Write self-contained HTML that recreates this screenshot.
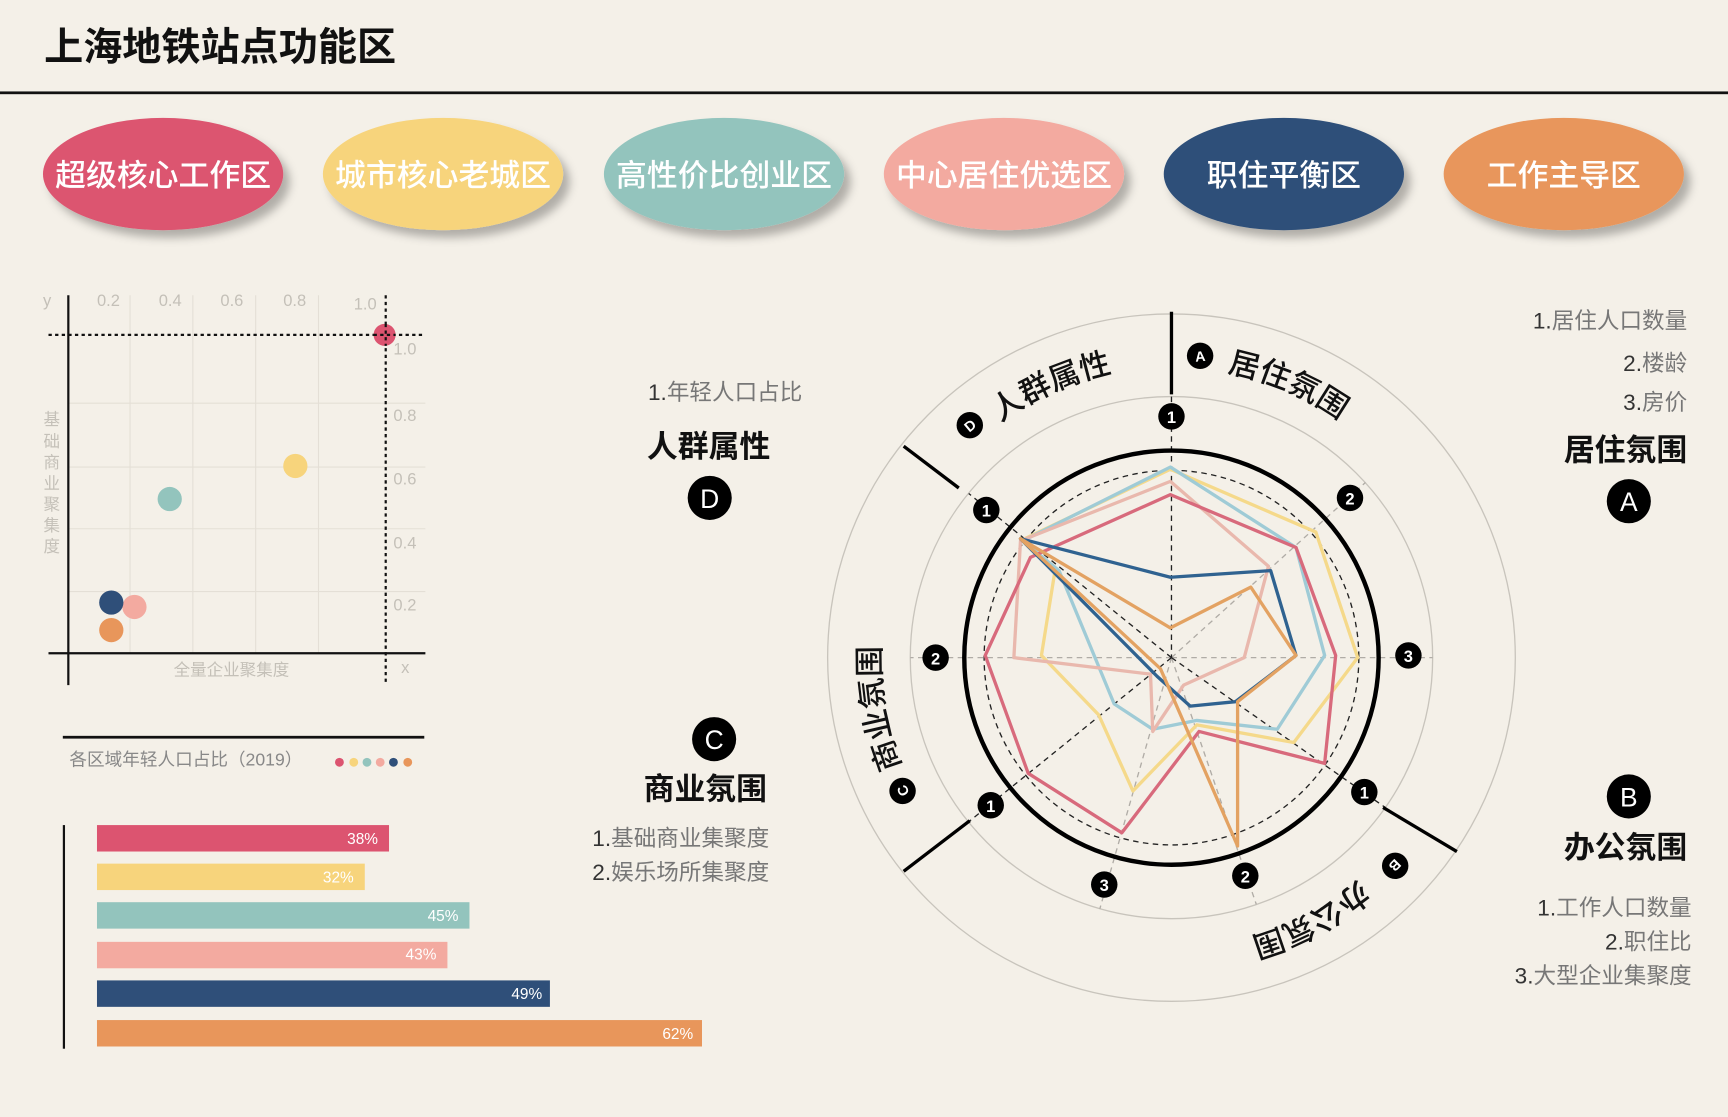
<!DOCTYPE html>
<html><head><meta charset="utf-8"><style>
html,body{margin:0;padding:0;background:#f4f0e8;overflow:hidden}
svg{display:block}
text{font-family:"Liberation Sans","Noto Sans CJK SC",sans-serif}
.g{fill:#777}
</style></head><body>
<svg width="1728" height="1117" viewBox="0 0 1568 1014" preserveAspectRatio="none" xmlns="http://www.w3.org/2000/svg">
<defs>
<filter id="sh" x="-20%" y="-20%" width="150%" height="160%"><feDropShadow dx="6" dy="7" stdDeviation="4" flood-color="#000" flood-opacity="0.28"/></filter>
<path id="pA" d="M1113.4,337.9 A264,264 0 0 1 1323,551.2"/>
<path id="pD" d="M907.8,383.4 A264,264 0 0 1 1195,368.4"/>
<path id="pC" d="M818.3,695.9 A264,264 0 0 1 893.3,394.8"/>
<path id="pB" d="M1236.2,796.2 A264,264 0 0 1 931,825.6"/>
</defs>
<rect width="1568" height="1014" fill="#f4f0e8"/>
<text x="40" y="55" font-size="35.5" font-weight="700" fill="#111">上海地铁站点功能区</text>
<rect x="0" y="83" width="1568" height="2.5" fill="#111"/>

<g filter="url(#sh)">
<ellipse cx="148" cy="158" rx="109" ry="51" fill="#dc5470"/>
<ellipse cx="402" cy="158" rx="109" ry="51" fill="#f7d47c"/>
<ellipse cx="657" cy="158" rx="109" ry="51" fill="#93c4bd"/>
<ellipse cx="911" cy="158" rx="109" ry="51" fill="#f3aaa0"/>
<ellipse cx="1165" cy="158" rx="109" ry="51" fill="#2f4f79"/>
<ellipse cx="1419" cy="158" rx="109" ry="51" fill="#e8965b"/>
</g>
<g font-size="28" fill="#fff" text-anchor="middle" font-weight="500">
<text x="148" y="169">超级核心工作区</text>
<text x="402" y="169">城市核心老城区</text>
<text x="657" y="169">高性价比创业区</text>
<text x="911" y="169">中心居住优选区</text>
<text x="1165" y="169">职住平衡区</text>
<text x="1419" y="169">工作主导区</text>
</g>

<g stroke="#e4dfd6" stroke-width="1">
<line x1="118" y1="268" x2="118" y2="593"/><line x1="175" y1="268" x2="175" y2="593"/>
<line x1="232" y1="268" x2="232" y2="593"/><line x1="289" y1="268" x2="289" y2="593"/>
<line x1="62" y1="366" x2="386" y2="366"/><line x1="62" y1="424" x2="386" y2="424"/>
<line x1="62" y1="480" x2="386" y2="480"/><line x1="62" y1="537" x2="386" y2="537"/>
</g>
<line x1="62" y1="268" x2="62" y2="622" stroke="#111" stroke-width="2"/>
<line x1="44" y1="593" x2="386" y2="593" stroke="#111" stroke-width="2"/>
<line x1="44" y1="304" x2="386" y2="304" stroke="#111" stroke-width="2" stroke-dasharray="3,3"/>
<line x1="350" y1="268" x2="350" y2="622" stroke="#111" stroke-width="2" stroke-dasharray="3,3"/>
<g font-size="15" fill="#c4c0b8">
<text x="39" y="278">y</text><text x="88" y="278">0.2</text><text x="144" y="278">0.4</text><text x="200" y="278">0.6</text><text x="257" y="278">0.8</text><text x="321" y="281">1.0</text>
<text x="357" y="322">1.0</text><text x="357" y="382">0.8</text><text x="357" y="440">0.6</text><text x="357" y="498">0.4</text><text x="357" y="554">0.2</text>
<text x="364" y="611">x</text><text x="210" y="613" text-anchor="middle">全量企业聚集度</text>
<text x="47" y="386" text-anchor="middle">基</text><text x="47" y="406" text-anchor="middle">础</text><text x="47" y="425" text-anchor="middle">商</text><text x="47" y="444" text-anchor="middle">业</text><text x="47" y="463" text-anchor="middle">聚</text><text x="47" y="482" text-anchor="middle">集</text><text x="47" y="501" text-anchor="middle">度</text>
</g>
<circle cx="349" cy="304" r="10" fill="#dc5470"/>
<line x1="339" y1="304" x2="359" y2="304" stroke="#111" stroke-width="2" stroke-dasharray="3,3"/>
<line x1="350" y1="294" x2="350" y2="314" stroke="#111" stroke-width="2" stroke-dasharray="3,3"/>
<circle cx="268" cy="423" r="11" fill="#f7d47c"/>
<circle cx="154" cy="453" r="11" fill="#93c4bd"/>
<circle cx="122" cy="551" r="11" fill="#f3aaa0"/>
<circle cx="101" cy="547" r="11" fill="#2f4f79"/>
<circle cx="101" cy="572" r="11" fill="#e8965b"/>

<rect x="57" y="668" width="328" height="2.5" fill="#111"/>
<text x="63" y="695" font-size="16" fill="#888">各区域年轻人口占比（2019）</text>
<circle cx="308" cy="692" r="4" fill="#dc5470"/><circle cx="321" cy="692" r="4" fill="#f7d47c"/><circle cx="333" cy="692" r="4" fill="#93c4bd"/><circle cx="345" cy="692" r="4" fill="#f3aaa0"/><circle cx="357" cy="692" r="4" fill="#2f4f79"/><circle cx="370" cy="692" r="4" fill="#e8965b"/>
<rect x="57" y="749" width="2" height="203" fill="#111"/>
<rect x="88" y="749" width="265" height="24" fill="#dc5470"/>
<rect x="88" y="784" width="243" height="24" fill="#f7d47c"/>
<rect x="88" y="819" width="338" height="24" fill="#93c4bd"/>
<rect x="88" y="855" width="318" height="24" fill="#f3aaa0"/>
<rect x="88" y="890" width="411" height="24" fill="#2f4f79"/>
<rect x="88" y="926" width="549" height="24" fill="#e8965b"/>
<g font-size="14" fill="#fff" text-anchor="end">
<text x="343" y="766">38%</text><text x="321" y="801">32%</text><text x="416" y="836">45%</text><text x="396" y="871">43%</text><text x="492" y="907">49%</text><text x="629" y="943">62%</text>
</g>

<text x="588" y="363" font-size="20.5" class="g"><tspan fill="#333">1.</tspan>年轻人口占比</text>
<text x="643" y="415" font-size="28" font-weight="700" text-anchor="middle" fill="#111">人群属性</text>
<circle cx="644" cy="452" r="20" fill="#000"/><text x="644" y="461" font-size="24" fill="#fff" text-anchor="middle">D</text>
<circle cx="648" cy="671" r="20" fill="#000"/><text x="648" y="680" font-size="24" fill="#fff" text-anchor="middle">C</text>
<text x="640" y="726" font-size="28" font-weight="700" text-anchor="middle" fill="#111">商业氛围</text>
<text x="698" y="768" font-size="20.5" class="g" text-anchor="end"><tspan fill="#333">1.</tspan>基础商业集聚度</text>
<text x="698" y="799" font-size="20.5" class="g" text-anchor="end"><tspan fill="#333">2.</tspan>娱乐场所集聚度</text>

<text x="1531" y="298" font-size="20.5" class="g" text-anchor="end"><tspan fill="#333">1.</tspan>居住人口数量</text>
<text x="1531" y="337" font-size="20.5" class="g" text-anchor="end"><tspan fill="#333">2.</tspan>楼龄</text>
<text x="1531" y="372" font-size="20.5" class="g" text-anchor="end"><tspan fill="#333">3.</tspan>房价</text>
<text x="1531" y="418" font-size="28" font-weight="700" text-anchor="end" fill="#111">居住氛围</text>
<circle cx="1478" cy="455" r="20" fill="#000"/><text x="1478" y="464" font-size="24" fill="#fff" text-anchor="middle">A</text>
<circle cx="1478" cy="723" r="20" fill="#000"/><text x="1478" y="732" font-size="24" fill="#fff" text-anchor="middle">B</text>
<text x="1531" y="779" font-size="28" font-weight="700" text-anchor="end" fill="#111">办公氛围</text>
<text x="1535" y="831" font-size="20.5" class="g" text-anchor="end"><tspan fill="#333">1.</tspan>工作人口数量</text>
<text x="1535" y="862" font-size="20.5" class="g" text-anchor="end"><tspan fill="#333">2.</tspan>职住比</text>
<text x="1535" y="893" font-size="20.5" class="g" text-anchor="end"><tspan fill="#333">3.</tspan>大型企业集聚度</text>

<g fill="none">
<circle cx="1063" cy="597" r="312" stroke="#c8c4bc" stroke-width="1.2"/>
<circle cx="1063" cy="597" r="237" stroke="#c8c4bc" stroke-width="1.2"/>
<g stroke="#b0aca6" stroke-width="1.2" stroke-dasharray="5,4">
<line x1="1063" y1="597" x2="1239" y2="438"/>
<line x1="1063" y1="597" x2="1300" y2="597"/>
<line x1="1063" y1="597" x2="1140" y2="821"/>
<line x1="1063" y1="597" x2="998" y2="825"/>
<line x1="1063" y1="597" x2="826" y2="597"/>
</g>
<g stroke="#222" stroke-width="1.2" stroke-dasharray="5,4">
<line x1="1063" y1="360" x2="1063" y2="597"/>
<line x1="1063" y1="597" x2="879" y2="448"/>
<line x1="1063" y1="597" x2="1257" y2="733"/>
<line x1="1063" y1="597" x2="879" y2="746"/>
</g>
<circle cx="1063" cy="597" r="170" stroke="#222" stroke-width="1.2" stroke-dasharray="5,4"/>
<circle cx="1063" cy="597" r="188" stroke="#000" stroke-width="4"/>
<g stroke="#000" stroke-width="3">
<line x1="1063" y1="283" x2="1063" y2="358"/>
<line x1="820" y1="405" x2="870" y2="443"/>
<line x1="820" y1="791" x2="880" y2="745"/>
<line x1="1255" y1="733" x2="1322" y2="773"/>
</g>
<g stroke-width="3" stroke-linejoin="round">
<polygon stroke="#f5d98a" points="1062,426 1194,483 1232,597 1174,674 1086,658 1028,718 997,649 945,595 957,520 930,489"/>
<polygon stroke="#9fcbd6" points="1062,424 1176,497 1202,595 1159,662 1086,654 1046,662 1011,639 961,518 928,491"/>
<polygon stroke="#e9b8ad" points="1062,437 1151,514 1129,597 1074,622 1046,664 1044,612 920,597 926,491"/>
<polygon stroke="#d86a7c" points="1062,449 1176,497 1212,595 1202,693 1088,664 1018,756 933,702 894,595 935,506"/>
<polygon stroke="#2f6290" points="1062,524 1153,518 1176,595 1121,637 1080,641 1050,614 926,489"/>
<polygon stroke="#e3a262" points="1062,570 1135,533 1176,595 1123,637 1123,768 1053,607 926,489"/>
</g>
</g>
<g fill="#000">
<circle cx="1063" cy="378" r="12"/><circle cx="1225" cy="452" r="12"/><circle cx="1278" cy="595" r="12"/>
<circle cx="1238" cy="719" r="12"/><circle cx="1130" cy="795" r="12"/><circle cx="1002" cy="803" r="12"/>
<circle cx="899" cy="731" r="12"/><circle cx="849" cy="597" r="12"/><circle cx="895" cy="463" r="12"/>
<circle cx="1089" cy="323" r="12"/><circle cx="880" cy="386" r="12"/><circle cx="819" cy="718" r="12"/><circle cx="1266" cy="786" r="12"/>
</g>
<g fill="#fff" font-size="15" font-weight="700" text-anchor="middle">
<text x="1063" y="384">1</text><text x="1225" y="458">2</text><text x="1278" y="601">3</text>
<text x="1238" y="725">1</text><text x="1130" y="801">2</text><text x="1002" y="809">3</text>
<text x="899" y="737">1</text><text x="849" y="603">2</text><text x="895" y="469">1</text>
<text x="1089" y="328" font-size="13" transform="rotate(-5 1089 323)">A</text>
<text x="880" y="391" font-size="13" transform="rotate(-40 880 386)">D</text>
<text x="819" y="723" font-size="13" transform="rotate(-115 819 718)">C</text>
<text x="1266" y="791" font-size="13" transform="rotate(135 1266 786)">B</text>
</g>
<g font-size="28" font-weight="500" fill="#111">
<text><textPath href="#pA">居住氛围</textPath></text>
<text><textPath href="#pD">人群属性</textPath></text>
<text><textPath href="#pC">商业氛围</textPath></text>
<text><textPath href="#pB" startOffset="4">办公氛围</textPath></text>
</g>
</svg>
</body></html>
